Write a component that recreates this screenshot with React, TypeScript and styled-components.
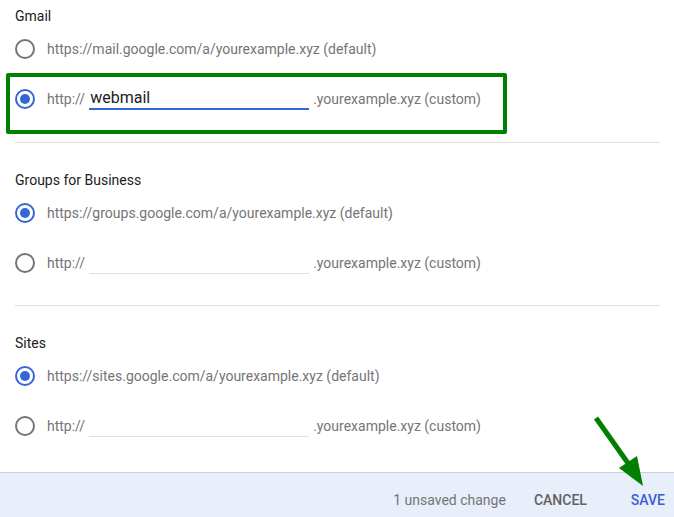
import React from "react";
import styled, { createGlobalStyle } from "styled-components";

const Global = createGlobalStyle`
  html, body { margin: 0; padding: 0; background: #ffffff; }
  body { font-family: Roboto, "Liberation Sans", Arial, sans-serif; overflow: hidden; }
`;

const Page = styled.div`
  position: relative;
  width: 674px;
  height: 517px;
  display: flex;
  flex-direction: column;
  overflow: hidden;
`;

const Content = styled.div`
  flex: 1;
  display: flex;
  flex-direction: column;
  padding: 0 14px 0 15px;
`;

const Section = styled.section<{ $top: number; $bottom: number; $divider?: boolean }>`
  display: flex;
  flex-direction: column;
  padding-top: ${(p) => p.$top}px;
  padding-bottom: ${(p) => p.$bottom}px;
  border-bottom: ${(p) => (p.$divider ? "1px solid #e0e0e0" : "none")};
`;

const Title = styled.div`
  font-size: 14px;
  line-height: 20px;
  color: #212121;
  margin-bottom: -2px;
`;

const Row = styled.label`
  position: relative;
  display: flex;
  align-items: center;
  height: 50px;
  font-size: 14px;
  color: #757575;
`;

const Radio = styled.span<{ $checked?: boolean }>`
  box-sizing: border-box;
  width: 20px;
  height: 20px;
  border-radius: 50%;
  border: 2px solid ${(p) => (p.$checked ? "#3367d6" : "#757575")};
  display: flex;
  align-items: center;
  justify-content: center;
  margin-right: 12px;
  &::after {
    content: "";
    width: 10px;
    height: 10px;
    border-radius: 50%;
    background: #3367d6;
    display: ${(p) => (p.$checked ? "block" : "none")};
  }
`;

const Prefix = styled.span`
  margin-right: 4px;
`;

const Field = styled.input<{ $active?: boolean }>`
  box-sizing: border-box;
  width: 220px;
  height: 22px;
  margin: 0;
  border: none;
  border-bottom: ${(p) => (p.$active ? "2px solid #3367d6" : "1px solid #e0e0e0")};
  padding: 0 0 ${(p) => (p.$active ? "2px" : "3px")} 1px;
  font-family: Roboto, "Liberation Sans", Arial, sans-serif;
  font-size: 16px;
  color: #212121;
  outline: none;
  background: transparent;
`;

const Suffix = styled.span`
  margin-left: 4px;
`;

const Highlight = styled.div`
  position: absolute;
  left: -9px;
  top: -1px;
  width: 501px;
  height: 61px;
  box-sizing: border-box;
  border: 4px solid #008000;
  border-radius: 2px;
  pointer-events: none;
`;

const Footer = styled.footer`
  box-sizing: border-box;
  height: 45px;
  flex-shrink: 0;
  border-top: 1px solid #c8d0e0;
  background: #e8eefa;
  display: flex;
  align-items: center;
  justify-content: flex-end;
  padding: 9px 9px 0 0;
  font-size: 14px;
`;

const Status = styled.span`
  color: #757575;
  margin-right: 28px;
`;

const Button = styled.button<{ $primary?: boolean }>`
  border: none;
  background: transparent;
  padding: 0;
  font-family: Roboto, "Liberation Sans", Arial, sans-serif;
  font-size: 14px;
  font-weight: 500;
  color: ${(p) => (p.$primary ? "#3b5fd0" : "#616161")};
  margin-left: ${(p) => (p.$primary ? "44px" : "0")};
  cursor: pointer;
`;

const Arrow = styled.svg`
  position: absolute;
  left: 0;
  top: 0;
  pointer-events: none;
`;

type Opt = { checked: boolean; text?: string; custom?: boolean; value?: string; active?: boolean; highlight?: boolean };

const Option: React.FC<Opt> = ({ checked, text, custom, value, active, highlight }) => (
  <Row>
    {highlight && <Highlight />}
    <Radio $checked={checked} />
    {custom ? (
      <>
        <Prefix>http://</Prefix>
        <Field $active={active} defaultValue={value} />
        <Suffix>.yourexample.xyz (custom)</Suffix>
      </>
    ) : (
      <span>{text}</span>
    )}
  </Row>
);

export default function App() {
  return (
    <Page>
      <Global />
      <Content>
        <Section $top={6} $bottom={18} $divider>
          <Title>Gmail</Title>
          <Option checked={false} text="https://mail.google.com/a/yourexample.xyz (default)" />
          <Option checked custom value="webmail" active highlight />
        </Section>
        <Section $top={27} $bottom={17} $divider>
          <Title>Groups for Business</Title>
          <Option checked text="https://groups.google.com/a/yourexample.xyz (default)" />
          <Option checked={false} custom />
        </Section>
        <Section $top={27} $bottom={0}>
          <Title>Sites</Title>
          <Option checked text="https://sites.google.com/a/yourexample.xyz (default)" />
          <Option checked={false} custom />
        </Section>
      </Content>
      <Footer>
        <Status>1 unsaved change</Status>
        <Button>CANCEL</Button>
        <Button $primary>SAVE</Button>
      </Footer>
      <Arrow width="674" height="517" viewBox="0 0 674 517">
        <line x1="596" y1="418" x2="630" y2="466" stroke="#008000" strokeWidth="5" />
        <polygon points="619,468 637,456 643,486" fill="#008000" />
      </Arrow>
    </Page>
  );
}
